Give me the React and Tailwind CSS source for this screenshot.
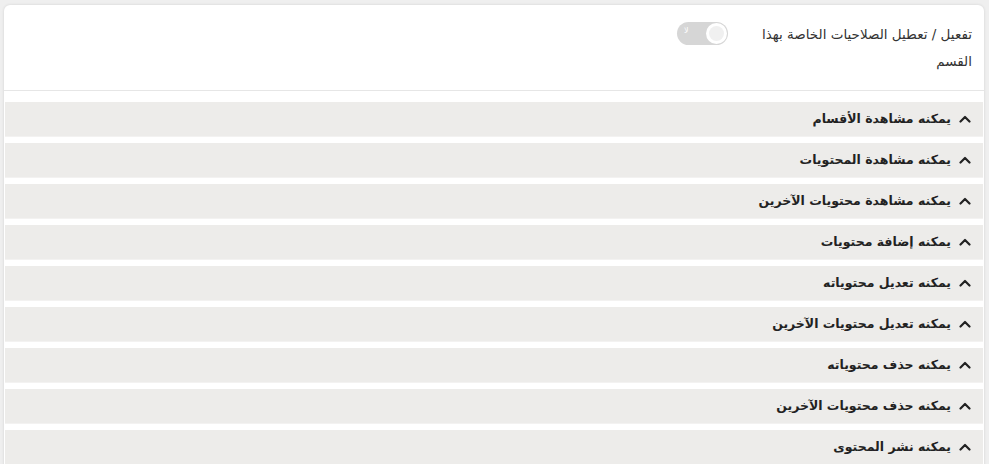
import React from "react";

const items = [
  "يمكنه مشاهدة الأقسام",
  "يمكنه مشاهدة المحتويات",
  "يمكنه مشاهدة محتويات الآخرين",
  "يمكنه إضافة محتويات",
  "يمكنه تعديل محتوياته",
  "يمكنه تعديل محتويات الآخرين",
  "يمكنه حذف محتوياته",
  "يمكنه حذف محتويات الآخرين",
  "يمكنه نشر المحتوى",
];

function Chevron() {
  return (
    <svg width="12" height="8" viewBox="0 0 12 8" className="shrink-0">
      <path d="M1.5 6.5 L6 2 L10.5 6.5" fill="none" stroke="#222" strokeWidth="2.2" strokeLinecap="round" strokeLinejoin="round" />
    </svg>
  );
}

export default function App() {
  return (
    <div
      className="w-[989px] h-[464px] overflow-hidden bg-[#efefef] pt-[5px] pl-[4px]"
      style={{ fontFamily: '"DejaVu Sans", "Noto Sans", sans-serif' }}
    >
      <div dir="rtl" className="w-[980px] h-[470px] bg-white rounded-[6px] shadow-[0_0_3px_rgba(0,0,0,0.12)]">
        <div className="h-[86px] border-b border-[#e6e6e6] flex items-start pr-[12px] pt-[16px]">
          <div className="w-[218px] text-[13.5px] leading-[27px] text-[#333]">
            تفعيل / تعطيل الصلاحيات الخاصة بهذا القسم
          </div>
          <div className="mr-[26px] mt-[1px] w-[51px] h-[23px] rounded-full bg-[#d6d6d6] relative flex items-center">
            <span className="absolute left-[7px] top-[3px] text-[8px] text-white">لا</span>
            <span className="absolute right-[1px] top-[1px] w-[21px] h-[21px] rounded-full bg-white flex items-center justify-center">
              <span className="w-[15px] h-[15px] rounded-full bg-[#f0f0f0]"></span>
            </span>
          </div>
        </div>
        <div className="pt-[11px] px-[1px] flex flex-col gap-[6px]">
          {items.map((t) => (
            <div
              key={t}
              className="h-[35px] bg-[#edecea] border-b border-[#f3f2f1] flex items-center gap-[8px] pr-[12px]"
            >
              <Chevron />
              <span className="text-[12.5px] font-bold text-[#222]">{t}</span>
            </div>
          ))}
        </div>
      </div>
    </div>
  );
}
